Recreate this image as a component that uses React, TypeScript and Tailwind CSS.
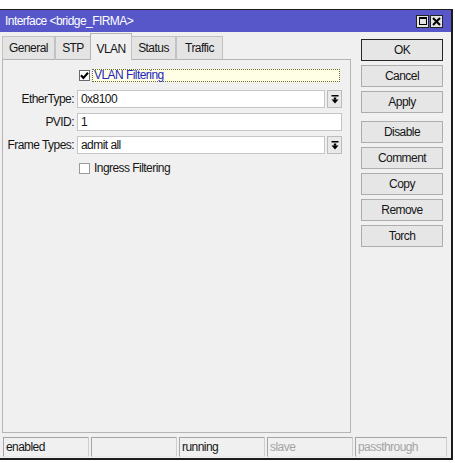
import React from 'react';

const Check = ({ checked }: { checked: boolean }) => (
  <div
    className={`w-[11px] h-[11px] bg-white border flex items-center justify-center shrink-0 ${
      checked ? 'border-[#6a6a6a]' : 'border-[#9a9a9a]'
    }`}
  >
    {checked && (
      <svg width="9" height="9" viewBox="0 0 9 9">
        <polyline points="1,4.3 3.4,7 8,1.8" fill="none" stroke="#000" strokeWidth="2.1" />
      </svg>
    )}
  </div>
);

const DropButton = () => (
  <div className="w-[15px] h-[18px] ml-[2px] bg-[#e9e9e9] border border-[#bcbcbc] flex items-center justify-center">
    <svg width="8" height="9" viewBox="0 0 8 9">
      <rect x="0.5" y="0" width="7" height="1.5" fill="#000" />
      <rect x="2.8" y="2.5" width="2.4" height="2.2" fill="#000" />
      <polygon points="0.5,4.6 7.5,4.6 4,8.4" fill="#000" />
    </svg>
  </div>
);

const tabs = ['General', 'STP', 'VLAN', 'Status', 'Traffic'];
const tabWidths: Record<string, string> = {
  General: 'w-[53px]',
  STP: 'w-[36px]',
  VLAN: 'w-[42px]',
  Status: 'w-[45px]',
  Traffic: 'w-[47px]',
};

const buttons = ['OK', 'Cancel', 'Apply', 'Disable', 'Comment', 'Copy', 'Remove', 'Torch'];

const status = [
  { text: 'enabled', dim: false },
  { text: '', dim: false },
  { text: 'running', dim: false },
  { text: 'slave', dim: true },
  { text: 'passthrough', dim: true },
];

export default function App() {
  return (
    <div className="w-[455px] h-[463px] bg-white pt-[9px] font-['Liberation_Sans',Arial,sans-serif] text-[12px] tracking-[-0.55px] whitespace-nowrap text-[#161616]">
      <div className="w-[453px] border-t border-r-2 border-b-2 border-[#1c1c1c] bg-[#f0f0f0] flex flex-col">
        {/* Title bar */}
        <div className="h-[22px] bg-[#5757ca] flex items-center justify-between pl-[5px] pr-[8px]">
          <span className="text-white leading-none">Interface &lt;bridge_FIRMA&gt;</span>
          <div className="flex gap-[1px]">
            <div className="w-[13px] h-[13px] bg-[#e4e4e4] border border-[#222] flex items-center justify-center">
              <div className="w-[8px] h-[8px] border border-t-2 border-[#000]" />
            </div>
            <div className="w-[13px] h-[13px] bg-[#e4e4e4] border border-[#222] flex items-center justify-center">
              <svg width="9" height="9" viewBox="0 0 9 9">
                <path d="M1 1 L8 8 M8 1 L1 8" stroke="#000" strokeWidth="2" />
              </svg>
            </div>
          </div>
        </div>

        {/* Body */}
        <div className="h-[405px] flex">
          <div className="w-[351px] pl-[2px] pt-[1px] flex flex-col">
            <div className="relative z-10 h-[27px] flex items-end">
              {tabs.map((t) =>
                t === 'VLAN' ? (
                  <div
                    key={t}
                    className={`${tabWidths[t]} h-[27px] -mx-[1px] bg-[#f0f0f0] border-t border-l border-r border-[#b4b4b4] flex items-start justify-center pt-[6px]`}
                  >
                    {t}
                  </div>
                ) : (
                  <div
                    key={t}
                    className={`${tabWidths[t]} h-[24px] bg-[#e4e4e4] border border-[#c2c2c2] border-b-[#b4b4b4] flex items-center justify-center`}
                  >
                    {t}
                  </div>
                )
              )}
            </div>
            <div className="-mt-px h-[374px] border border-[#b4b4b4] pt-[8px] pr-[8px] flex flex-col">
              <div className="h-[14px] flex items-center pl-[76px]">
                <Check checked />
                <div className="ml-[2px] w-[248px] h-[13px] bg-[#ffffe6] border border-dotted border-[#6b6b2a] flex items-center pl-[1px]">
                  <span className="text-[#2424c4] leading-none">VLAN Filtering</span>
                </div>
              </div>

              <div className="mt-[8px] h-[18px] flex items-center">
                <div className="w-[72px] text-right pr-[1px]">EtherType:</div>
                <div className="ml-[2px] w-[248px] h-[18px] bg-white border border-[#c6c6c6] pl-[3px] flex items-center">0x8100</div>
                <DropButton />
              </div>

              <div className="mt-[5px] h-[18px] flex items-center">
                <div className="w-[72px] text-right pr-[1px]">PVID:</div>
                <div className="ml-[2px] w-[265px] h-[18px] bg-white border border-[#c6c6c6] pl-[3px] flex items-center">1</div>
              </div>

              <div className="mt-[5px] h-[18px] flex items-center">
                <div className="w-[72px] text-right pr-[1px]">Frame Types:</div>
                <div className="ml-[2px] w-[248px] h-[18px] bg-white border border-[#c6c6c6] pl-[3px] flex items-center">admit all</div>
                <DropButton />
              </div>

              <div className="mt-[7px] h-[14px] flex items-center pl-[76px]">
                <Check checked={false} />
                <span className="ml-[4px] leading-none">Ingress Filtering</span>
              </div>
            </div>
          </div>

          {/* Buttons */}
          <div className="pl-[10px] pt-[7px] flex flex-col">
            {buttons.map((b, i) => (
              <div
                key={b}
                className={`w-[82px] h-[22px] bg-[#e6e6e6] border flex items-center justify-center ${
                  b === 'OK' ? 'border-[#262626]' : 'border-[#adadad]'
                } ${i === 0 ? '' : i === 3 ? 'mt-[8px]' : 'mt-[4px]'}`}
              >
                {b}
              </div>
            ))}
          </div>
        </div>

        {/* Status bar */}
        <div className="h-[20px] mb-[1px] pl-[3px] flex gap-[2px]">
          {status.map((s, i) => (
            <div
              key={i}
              className={`${i === 4 ? 'w-[92px]' : 'w-[86px]'} h-[20px] border border-t-[#a6a6a6] border-l-[#a6a6a6] border-r-[#cfcfcf] border-b-[#e8e8e8] pl-[2px] flex items-center ${
                s.dim ? 'text-[#a4a4a4]' : 'text-[#161616]'
              }`}
            >
              {s.text}
            </div>
          ))}
        </div>
      </div>
    </div>
  );
}
